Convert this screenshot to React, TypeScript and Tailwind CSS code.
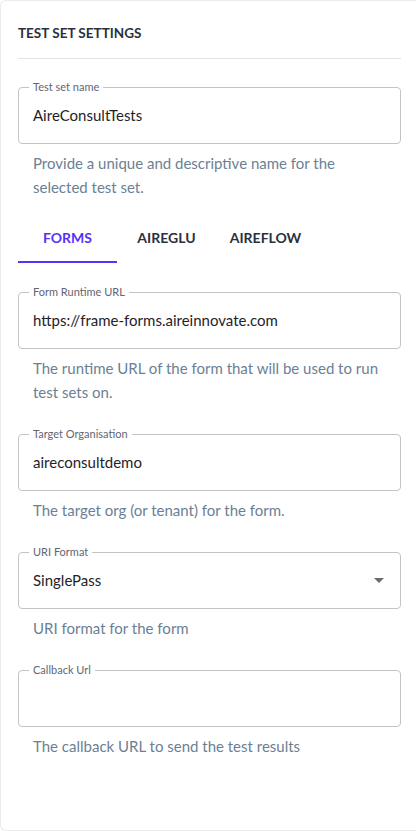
import { useState } from "react";

const font = { fontFamily: "Lato, 'Noto Sans', sans-serif" };

function Field({
  label,
  value,
  helper,
  select,
}: {
  label: string;
  value: string;
  helper: string;
  select?: boolean;
}) {
  return (
    <div>
      <div className="relative flex h-[57px] items-center rounded-[4px] border border-[#c4c4c4] pl-[14px] pr-[16px]">
        <span className="absolute -top-[7px] left-[10px] bg-white px-[4px] text-[11px] leading-[12px] text-[#5f6672]">
          {label}
        </span>
        <span className="flex-1 text-[15px] text-[#1f2328]">{value}</span>
        {select && (
          <svg width="10" height="5" viewBox="0 0 10 5">
            <path d="M0 0 L10 0 L5 5 Z" fill="#6b6b6b" />
          </svg>
        )}
      </div>
      <p className="px-[15px] pt-[7px] text-[15px] leading-[24px] text-[#6b7f95]">{helper}</p>
    </div>
  );
}

export default function App() {
  const [tab, setTab] = useState("FORMS");
  const tabs = ["FORMS", "AIREGLU", "AIREFLOW"];

  return (
    <div className="min-h-screen bg-white" style={font}>
      <div className="h-[831px] rounded-l-[6px] border-l border-t border-b border-[#ebebeb] pl-[17px] pr-[15px]">
        <h2 className="pt-[22px] pb-[15px] text-[13.5px] font-bold uppercase leading-[20px] text-[#2a313c]">
          Test Set Settings
        </h2>
        <div className="border-t border-[#e3e3e3]" />

        <div className="pt-[28px]">
          <Field
            label="Test set name"
            value="AireConsultTests"
            helper="Provide a unique and descriptive name for the selected test set."
          />
        </div>

        <div className="mt-[16px] flex">
          {tabs.map((t) => (
            <button
              key={t}
              onClick={() => setTab(t)}
              className={`relative h-[48px] w-[99px] pb-[4px] text-[14px] font-bold ${
                tab === t ? "text-[#5534f5]" : "text-[#2a313c]"
              }`}
            >
              {t}
              {tab === t && <span className="absolute bottom-0 left-0 h-[2px] w-full bg-[#5533ff]" />}
            </button>
          ))}
        </div>

        <div className="flex flex-col gap-[30px] pt-[29px]">
          <Field
            label="Form Runtime URL"
            value="https://frame-forms.aireinnovate.com"
            helper="The runtime URL of the form that will be used to run test sets on."
          />
          <Field label="Target Organisation" value="aireconsultdemo" helper="The target org (or tenant) for the form." />
          <Field label="URI Format" value="SinglePass" helper="URI format for the form" select />
          <Field label="Callback Url" value="" helper="The callback URL to send the test results" />
        </div>
      </div>
    </div>
  );
}
